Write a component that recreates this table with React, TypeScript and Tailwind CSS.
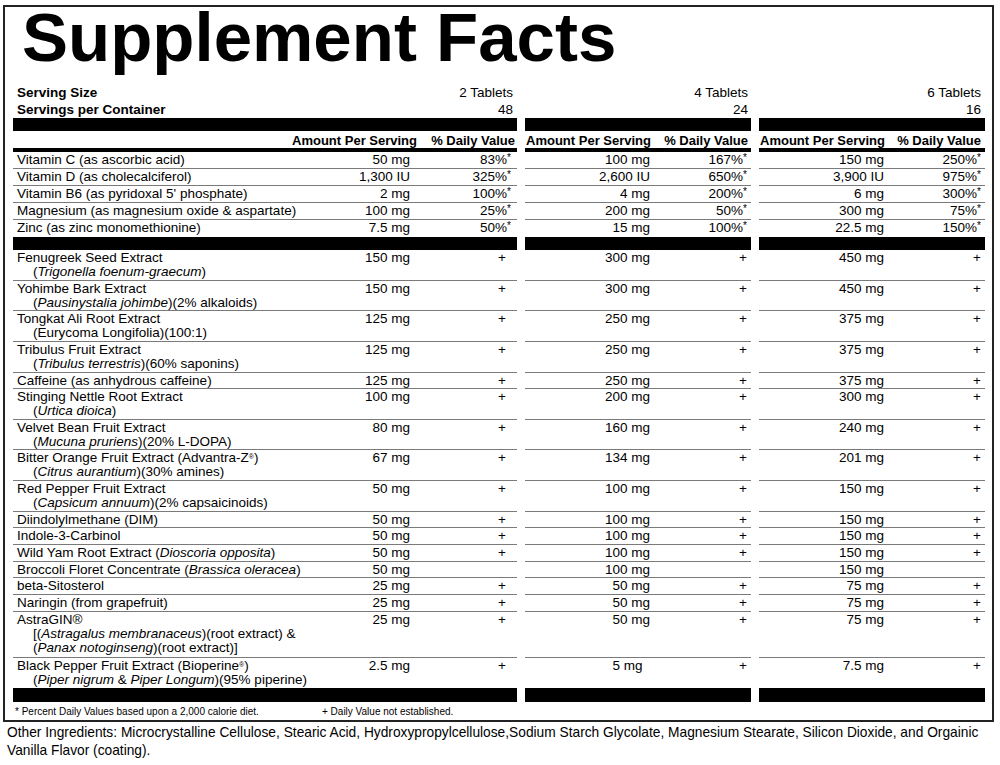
import type { ReactNode } from "react";

type Vitamin = { name: string; amt: [string, string, string]; dv: [string, string, string] };

type Item = {
  name: ReactNode;
  sub?: ReactNode[];
  amt: [string, string, string];
  plus?: boolean;
};

const vitamins: Vitamin[] = [
  { name: "Vitamin C (as ascorbic acid)", amt: ["50 mg", "100 mg", "150 mg"], dv: ["83%", "167%", "250%"] },
  { name: "Vitamin D (as cholecalciferol)", amt: ["1,300 IU", "2,600 IU", "3,900 IU"], dv: ["325%", "650%", "975%"] },
  { name: "Vitamin B6 (as pyridoxal 5' phosphate)", amt: ["2 mg", "4 mg", "6 mg"], dv: ["100%", "200%", "300%"] },
  { name: "Magnesium (as magnesium oxide & aspartate)", amt: ["100 mg", "200 mg", "300 mg"], dv: ["25%", "50%", "75%"] },
  { name: "Zinc (as zinc monomethionine)", amt: ["7.5 mg", "15 mg", "22.5 mg"], dv: ["50%", "100%", "150%"] },
];

const Reg = () => <sup className="text-[7px]">®</sup>;

const items: Item[] = [
  { name: "Fenugreek Seed Extract", sub: [<>(<i>Trigonella foenum-graecum</i>)</>], amt: ["150 mg", "300 mg", "450 mg"] },
  { name: "Yohimbe Bark Extract", sub: [<>(<i>Pausinystalia johimbe</i>)(2% alkaloids)</>], amt: ["150 mg", "300 mg", "450 mg"] },
  { name: "Tongkat Ali Root Extract", sub: ["(Eurycoma Longifolia)(100:1)"], amt: ["125 mg", "250 mg", "375 mg"] },
  { name: "Tribulus Fruit Extract", sub: [<>(<i>Tribulus terrestris</i>)(60% saponins)</>], amt: ["125 mg", "250 mg", "375 mg"] },
  { name: "Caffeine (as anhydrous caffeine)", amt: ["125 mg", "250 mg", "375 mg"] },
  { name: "Stinging Nettle Root Extract", sub: [<>(<i>Urtica dioica</i>)</>], amt: ["100 mg", "200 mg", "300 mg"] },
  { name: "Velvet Bean Fruit Extract", sub: [<>(<i>Mucuna pruriens</i>)(20% L-DOPA)</>], amt: ["80 mg", "160 mg", "240 mg"] },
  {
    name: <>Bitter Orange Fruit Extract (Advantra-Z<Reg />)</>,
    sub: [<>(<i>Citrus aurantium</i>)(30% amines)</>],
    amt: ["67 mg", "134 mg", "201 mg"],
  },
  { name: "Red Pepper Fruit Extract", sub: [<>(<i>Capsicum annuum</i>)(2% capsaicinoids)</>], amt: ["50 mg", "100 mg", "150 mg"] },
  { name: "Diindolylmethane (DIM)", amt: ["50 mg", "100 mg", "150 mg"] },
  { name: "Indole-3-Carbinol", amt: ["50 mg", "100 mg", "150 mg"] },
  { name: <>Wild Yam Root Extract (<i>Dioscoria opposita</i>)</>, amt: ["50 mg", "100 mg", "150 mg"] },
  { name: <>Broccoli Floret Concentrate (<i>Brassica oleracea</i>)</>, amt: ["50 mg", "100 mg", "150 mg"], plus: false },
  { name: "beta-Sitosterol", amt: ["25 mg", "50 mg", "75 mg"] },
  { name: "Naringin (from grapefruit)", amt: ["25 mg", "50 mg", "75 mg"] },
  {
    name: "AstraGIN®",
    sub: [
      <>[(<i>Astragalus membranaceus</i>)(root extract) &amp;</>,
      <>(<i>Panax notoginseng</i>)(root extract)]</>,
    ],
    amt: ["25 mg", "50 mg", "75 mg"],
  },
  {
    name: <>Black Pepper Fruit Extract (Bioperine<Reg />)</>,
    sub: [<>(<i>Piper nigrum</i> &amp; <i>Piper Longum</i>)(95% piperine)</>],
    amt: ["2.5 mg", "5 mg\u00a0\u00a0", "7.5 mg"],
  },
];

const cols = "grid grid-cols-[504px_226px_226px] gap-x-2";

function BlackBar({ h }: { h: string }) {
  return (
    <div className={cols}>
      <div className={`bg-black ${h}`} />
      <div className={`bg-black ${h}`} />
      <div className={`bg-black ${h}`} />
    </div>
  );
}

function ItemRow({ item, last }: { item: Item; last: boolean }) {
  const line = last ? "" : "border-b border-[#7a7a7a]";
  const pb = (item.sub?.length ?? 0) > 1 ? "pb-[2.65px]" : "pb-[0.65px]";
  const plus = item.plus === false ? "" : "+";
  return (
    <div className={cols}>
      <div className={`flex pt-px leading-[14px] ${pb} ${line}`}>
        <div className="flex-1 pl-1">
          <div>{item.name}</div>
          {item.sub?.map((s, i) => (
            <div key={i} className="pl-4">
              {s}
            </div>
          ))}
        </div>
        <div className="w-[80px] text-right">{item.amt[0]}</div>
        <div className="w-[107px] pr-[11px] text-right">{plus}</div>
      </div>
      {[1, 2].map((c) => (
        <div key={c} className={`flex pt-px leading-[14px] ${pb} ${line}`}>
          <div className="w-[125px] text-right">{item.amt[c]}</div>
          <div className="flex-1 pr-[4px] text-right">{plus}</div>
        </div>
      ))}
    </div>
  );
}

export default function App() {
  return (
    <div className="min-h-[765px] w-[1000px] bg-white pl-[3px] pt-[5px] font-['Liberation_Sans',Arial,Helvetica,sans-serif] text-[13.5px] text-black">
      <div className="w-[991px] border-2 border-[#222] pl-2 pr-[7px]">
        <h1 className="mb-[17px] pl-[9px] pt-[2px] text-[69px] font-bold leading-[58px]">Supplement Facts</h1>

        {/* serving info */}
        <div className={`${cols} leading-[17px]`}>
          <div className="pl-1 pr-1">
            <div className="flex justify-between">
              <span className="font-bold">Serving Size</span>
              <span>2 Tablets</span>
            </div>
            <div className="flex justify-between">
              <span className="font-bold">Servings per Container</span>
              <span>48</span>
            </div>
          </div>
          <div className="pr-[3px] text-right">
            <div>4 Tablets</div>
            <div>24</div>
          </div>
          <div className="pr-1 text-right">
            <div>6 Tablets</div>
            <div>16</div>
          </div>
        </div>

        <BlackBar h="h-[13px]" />

        {/* column headers */}
        <div className={`${cols} whitespace-nowrap text-[13px] font-bold leading-[15px]`}>
          <div className="flex justify-end border-b-4 border-black pt-[2px]">
            <div className="text-right">Amount Per Serving</div>
            <div className="w-[100px] shrink-0 pr-[2px] text-right">% Daily Value</div>
          </div>
          <div className="flex border-b-4 border-black pt-[2px]">
            <div className="w-[126px] shrink-0 text-right">Amount Per Serving</div>
            <div className="flex-1 pr-[3px] text-right">% Daily Value</div>
          </div>
          <div className="flex border-b-4 border-black pt-[2px]">
            <div className="w-[126px] shrink-0 text-right">Amount Per Serving</div>
            <div className="flex-1 pr-[4px] text-right">% Daily Value</div>
          </div>
        </div>

        {/* vitamins & minerals */}
        {vitamins.map((v, idx) => {
          const line = idx === vitamins.length - 1 ? "pb-[2px]" : "pb-px border-b border-[#7a7a7a]";
          return (
            <div key={v.name} className={cols}>
              <div className={`flex pt-px leading-[14px] ${line}`}>
                <div className="flex-1 pl-1">{v.name}</div>
                <div className="w-[80px] text-right">{v.amt[0]}</div>
                <div className="w-[107px] pr-[6px] text-right">
                  {v.dv[0]}
                  <span className="align-top text-[10px] leading-none">*</span>
                </div>
              </div>
              {[1, 2].map((c) => (
                <div key={c} className={`flex pt-px leading-[14px] ${line}`}>
                  <div className="w-[125px] text-right">{v.amt[c]}</div>
                  <div className="flex-1 pr-[4px] text-right">
                    {v.dv[c]}
                    <span className="align-top text-[10px] leading-none">*</span>
                  </div>
                </div>
              ))}
            </div>
          );
        })}

        <BlackBar h="h-[13px]" />

        {/* blend ingredients */}
        {items.map((it, idx) => (
          <ItemRow key={idx} item={it} last={idx === items.length - 1} />
        ))}

        <BlackBar h="h-[14px]" />

        <div className="flex pl-[2px] pt-[2px] text-[10px] leading-[16px]">
          <span className="w-[307px]">* Percent Daily Values based upon a 2,000 calorie diet.</span>
          <span>+ Daily Value not established.</span>
        </div>
      </div>

      <p className="ml-[4px] pt-[2px] text-[13.75px] leading-[18px]">
        Other Ingredients: Microcrystalline Cellulose, Stearic Acid, Hydroxypropylcellulose,Sodium Starch Glycolate, Magnesium
        Stearate, Silicon Dioxide, and Orgainic
        <br />
        Vanilla Flavor (coating).
      </p>
    </div>
  );
}
